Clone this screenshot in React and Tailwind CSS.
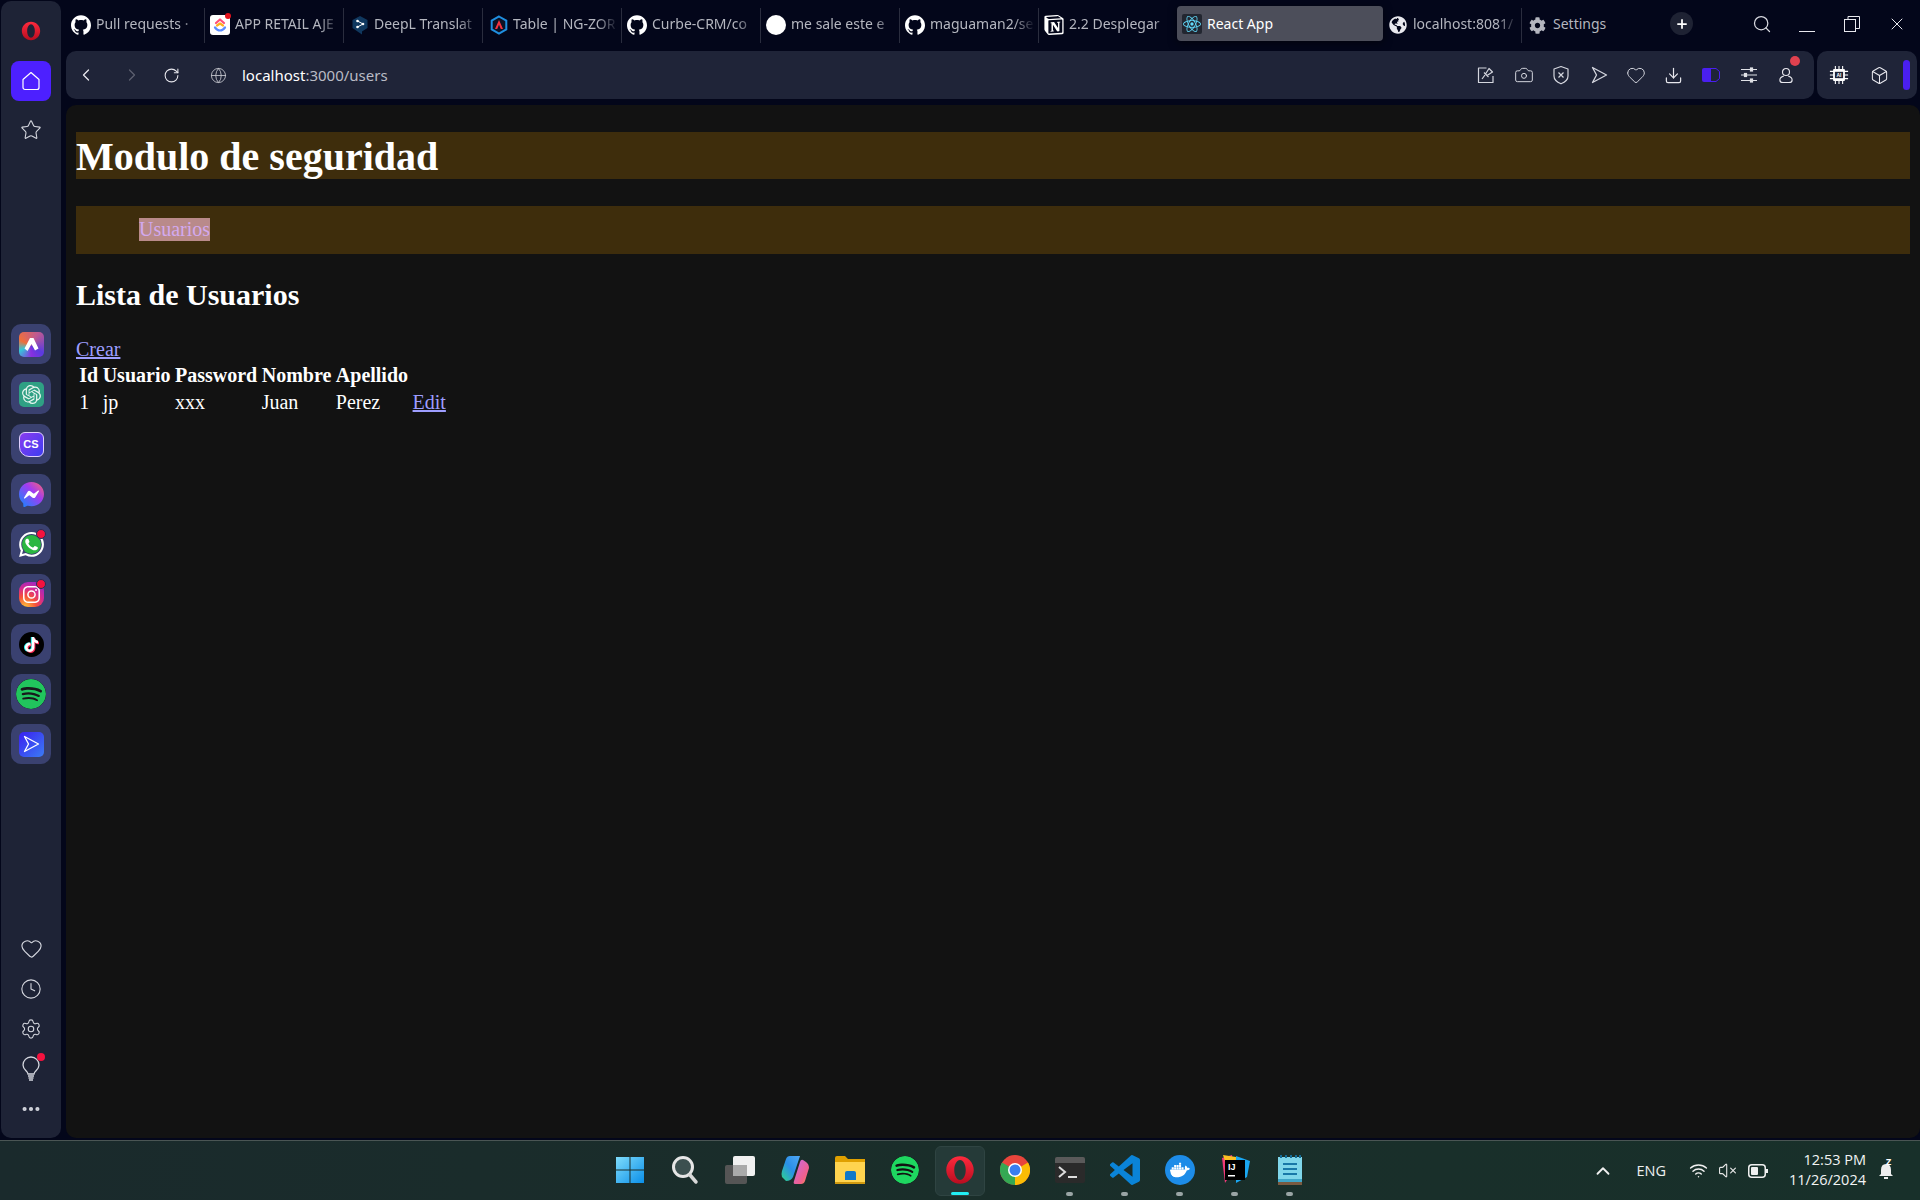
import React from "react";
import { Camera, Heart, Download, Box, ChevronLeft, ChevronRight, RotateCw, Globe, Clock, Settings, Star, Search, Plus, X, Wifi, VolumeX, ChevronUp, Ellipsis } from "lucide-react";
import { SiGithub, SiNotion, SiReact, SiWhatsapp, SiMessenger, SiOpenai, SiSpotify, SiTiktok, SiInstagram, SiDocker } from "react-icons/si";
import { FaGlobeAmericas, FaCog } from "react-icons/fa";

const Opera = ({ s = 20 }) => (
  <svg width={s} height={s} viewBox="0 0 24 24">
    <defs><linearGradient id="op" x1="0" y1="0" x2="0" y2="1"><stop offset="0" stopColor="#ff2a3d" /><stop offset="1" stopColor="#b80d20" /></linearGradient></defs>
    <path fillRule="evenodd" fill="url(#op)" d="M12 1C5.9 1 1 5.9 1 12s4.9 11 11 11 11-4.9 11-11S18.100 1 12 1zm0 3c2.600 0 4.600 3.600 4.600 8s-2 8-4.600 8-4.600-3.600-4.600-8 2-8 4.600-8z" />
  </svg>
);

const ClickUp = () => (
  <span className="relative w-[20px] h-[20px] rounded-[3px] bg-white flex items-center justify-center shrink-0">
    <svg width="16" height="16" viewBox="0 0 16 16" fill="none" strokeWidth="2.200" strokeLinecap="round" strokeLinejoin="round">
      <path d="M4 6 L8 2.500 L12 6" stroke="#ff4f7a" />
      <path d="M3 10.500 C6 14.500 10 14.500 13 10.500" stroke="#5b8cff" />
      <path d="M5 8.500 L8 6.500 L11 8.500" stroke="#ffb020" />
    </svg>
    <span className="absolute -top-[2px] -right-[1px] w-[6px] h-[6px] rounded-full bg-[#e3121d]" />
  </span>
);

const DeepL = () => (
  <svg width="18" height="20" viewBox="0 0 18 20" className="shrink-0 ml-[1px]">
    <path d="M9 1 L16.500 5 V13 L11 16.500 V19.500 L8 17.500 L1.500 13 V5 Z" fill="#10385f" />
    <circle cx="6.500" cy="6" r="1.300" fill="#fff" /><circle cx="6.500" cy="12" r="1.300" fill="#fff" /><circle cx="12" cy="9" r="1.300" fill="#fff" />
    <path d="M6.500 6 L12 9 L6.500 12" stroke="#fff" strokeWidth="1" fill="none" />
  </svg>
);

const Zorro = () => (
  <svg width="18" height="20" viewBox="0 0 18 20" className="shrink-0 ml-[1px]">
    <path d="M9 1.500 L16.300 5.700 V14.300 L9 18.500 L1.700 14.300 V5.700 Z" fill="#0d1224" stroke="#1f8fe0" strokeWidth="2" />
    <path d="M9 5 L13 14 H10.800 L9 9.800 L7.200 14 H5 Z" fill="#f5333f" />
  </svg>
);

const Tab = ({ icon, title, w = "w-[139px]", divider = true }) => (
  <div className={`${w} h-[35px] shrink-0 flex items-center pl-[5px] pr-[3px] gap-[5px] ${divider ? "border-r border-[#2a2d3e]" : ""}`}>
    <span className="w-[20px] h-[20px] flex items-center justify-center shrink-0">{icon}</span>
    <span className="flex-1 overflow-hidden whitespace-nowrap text-[14px] leading-[20px] -mt-[2px] text-[#b4b6bf] [mask-image:linear-gradient(to_right,black_80%,transparent)]">{title}</span>
  </div>
);

const Gh = () => <SiGithub size={20} color="#fff" />;

const TabBar = () => (
  <div className="h-[51px] flex pt-[6px] items-start">
    <div className="flex items-center h-[35px] pt-[1px] mt-[1px]">
      <Tab icon={<Gh />} title="Pull requests · " />
      <Tab icon={<ClickUp />} title="APP RETAIL AJE" />
      <Tab icon={<DeepL />} title="DeepL Translat" />
      <Tab icon={<Zorro />} title="Table | NG-ZOR" />
      <Tab icon={<Gh />} title="Curbe-CRM/co" />
      <Tab icon={<span className="w-[20px] h-[20px] rounded-full bg-white block" />} title="me sale este e" />
      <Tab icon={<Gh />} title="maguaman2/se" />
      <Tab icon={<SiNotion size={20} color="#fff" />} title="2.2 Desplegar" w="w-[138px]" divider={false} />
    </div>
    <div className="w-[206px] h-[35px] shrink-0 rounded-[4px] bg-[#4c4e5a] shadow-[0_2px_8px_rgba(0,0,0,0.5)] flex items-center pl-[5px] gap-[5px]">
      <span className="w-[20px] h-[20px] rounded-[2px] bg-[#222630] flex items-center justify-center"><SiReact size={18} color="#61dafb" /></span>
      <span className="text-[14px] leading-[20px] text-white">React App</span>
    </div>
    <div className="flex items-center h-[35px] pt-[1px] mt-[1px]">
      <Tab icon={<FaGlobeAmericas size={18} color="#e8e8ee" />} title="localhost:8081/" />
      <div className="flex items-center pl-[7px] gap-[7px]">
        <FaCog size={17} color="#b4b6bf" />
        <span className="text-[14px] leading-[20px] -mt-[2px] text-[#b4b6bf]">Settings</span>
      </div>
    </div>
    <div className="ml-[64px] mt-[6px] w-[23px] h-[23px] rounded-full bg-[#1e2233] flex items-center justify-center shrink-0">
      <Plus size={14} color="#fff" strokeWidth={3} />
    </div>
    <div className="ml-[59px] mt-[8px]"><Search size={20} color="#d8d9e0" strokeWidth={1.5} /></div>
    <div className="ml-[27px] mt-[25px] w-[16px] h-[1px] bg-[#e8e8ee]" />
    <svg width="16" height="16" viewBox="0 0 16 16" fill="none" stroke="#e8e8ee" className="ml-[29px] mt-[10px]"><rect x="0.500" y="3.500" width="11" height="12" /><path d="M4 3 V0.500 H15.500 V12.500 H12" /></svg>
    <X size={20} color="#e8e8ee" strokeWidth={1.2} className="ml-[27px] mt-[8px]" />
  </div>
);

const Send = ({ c = "#d4d6de" }) => (
  <svg width="18" height="18" viewBox="0 0 18 18" fill="none" stroke={c} strokeWidth="1.300" strokeLinejoin="round"><path d="M2.500 1.500 L16.500 9 L2.500 16.500 L6.500 9 Z" /></svg>
);

const NotePin = () => (
  <svg width="18" height="18" viewBox="0 0 18 18" fill="none" stroke="#d4d6de" strokeWidth="1.200" strokeLinejoin="round">
    <path d="M9.500 2 H1.500 V16.500 H16 V10" />
    <path d="M5 13 L8 9 M7 6.500 L11.500 11 M8.500 8 L12 2.500 L15.500 6 L10 9.500" />
  </svg>
);

const ShieldCross = () => (
  <svg width="18" height="20" viewBox="0 0 18 20" fill="none" stroke="#d4d6de" strokeWidth="1.200" strokeLinejoin="round">
    <path d="M9 1.500 L16 4 V11 Q16 16 9 18.800 Q2 16 2 11 V4 Z" /><path d="M6.500 7.500 L11.500 12.500 M11.500 7.500 L6.500 12.500" />
  </svg>
);

const Sliders = () => (
  <svg width="18" height="16" viewBox="0 0 18 16" fill="none" stroke="#e0e1e6" strokeWidth="1.200">
    <path d="M1 2.500 H17 M1 8 H17 M1 13.500 H17" /><rect x="10.500" y="1" width="2" height="3" fill="#e0e1e6" /><rect x="4.500" y="6.500" width="2" height="3" fill="#e0e1e6" /><rect x="10.500" y="12" width="2" height="3" fill="#e0e1e6" />
  </svg>
);

const UserIc = () => (
  <svg width="14" height="17" viewBox="0 0 16 18" fill="none" stroke="#e8e8ee" strokeWidth="1.300">
    <circle cx="8" cy="5" r="4" /><path d="M5.500 9.500 C2.500 10.500 1 12 1 14 C1 16 2.500 17 4.500 17 H11.500 C13.500 17 15 16 15 14 C15 12 13.500 10.500 10.500 9.500" />
  </svg>
);

const Chip = () => (
  <svg width="20" height="20" viewBox="0 0 22 22" fill="none">
    <path d="M7 1 V21 M11 1 V21 M15 1 V21 M1 7 H21 M1 11 H21 M1 15 H21" stroke="#fff" strokeWidth="1.200" />
    <rect x="4.500" y="4.500" width="13" height="13" rx="1" fill="#fff" />
    <rect x="6.500" y="7.500" width="9" height="7" fill="#1f2438" />
    <text x="11" y="13" textAnchor="middle" fontSize="5.500" fontWeight="700" fill="#fff" fontFamily="Liberation Sans, sans-serif">AI</text>
  </svg>
);

const TB = ({ children, w = "w-[37.500px]" }) => <span className={`${w} flex items-center justify-center shrink-0 relative`}>{children}</span>;

const Toolbar = () => (
  <div className="h-[48px] flex gap-[3px]">
    <div className="flex-1 rounded-[10px] bg-[#1f2438] flex items-center">
      <ChevronLeft size={20} color="#e8e8ee" strokeWidth={1.5} className="ml-[10px]" />
      <ChevronRight size={20} color="#5d6070" strokeWidth={1.5} className="ml-[26px]" />
      <RotateCw size={17} color="#e8e8ee" strokeWidth={1.5} className="ml-[21px]" />
      <Globe size={17} color="#c8c9d0" strokeWidth={1.2} className="ml-[30px]" />
      <span className="ml-[15px] mt-[1px] text-[15px] text-[#b9bbc5]"><span className="text-white">localhost</span>:3000/users</span>
      <div className="ml-auto mr-[9px] flex items-center">
        <TB><NotePin /></TB>
        <TB><Camera size={20} color="#d4d6de" strokeWidth={1.2} /></TB>
        <TB><ShieldCross /></TB>
        <TB><Send /></TB>
        <TB><Heart size={20} color="#d4d6de" strokeWidth={1.2} /></TB>
        <TB><Download size={19} color="#e8e8ee" strokeWidth={1.5} /></TB>
        <TB>
          <svg width="18" height="14" viewBox="0 0 18 14"><path d="M2 0 H9 V14 H2 A2 2 0 0 1 0 12 V2 A2 2 0 0 1 2 0Z" fill="#4a1ff0" /><path d="M9 .500 H14 L17.500 3.500 V10.500 L14 13.500 H9" fill="none" stroke="#4a1ff0" /></svg>
        </TB>
        <TB><Sliders /></TB>
        <TB>
          <UserIc />
          <span className="absolute -top-[11px] right-[5px] w-[10px] h-[10px] rounded-full bg-[#e0414f]" />
        </TB>
      </div>
    </div>
    <div className="w-[100px] rounded-[10px] bg-[#1f2438] flex items-center pl-[2px] mr-[3px]">
      <TB w="w-[40px]"><Chip /></TB>
      <TB w="w-[40px]"><Box size={19} color="#e8e8ee" strokeWidth={1.3} /></TB>
      <span className="w-[7px] h-[30px] ml-[4px] rounded-full bg-[#4a1ff0]" />
    </div>
  </div>
);

const Content = () => (
  <div className="mt-[6px] flex-1 rounded-[10px] bg-[#121212] px-[10px] text-white [font-family:'Liberation_Serif',serif] text-[20px] overflow-hidden">
    <h1 className="mt-[27px] h-[47px] leading-[47px] pt-px bg-[#3e2d0c] text-[40px] font-bold">Modulo de seguridad</h1>
    <nav className="mt-[27px] h-[48px] bg-[#3e2d0c] pl-[63px] flex items-center">
      <span className="bg-[#b98a8a] text-[#d3a9ef] leading-[23px] h-[23px] -mt-[1px]">Usuarios</span>
    </nav>
    <h2 className="mt-[24px] text-[30px] font-bold leading-[34px]">Lista de Usuarios</h2>
    <div className="mt-[26px] leading-[22px]"><a className="text-[#9e9eff] underline">Crear</a></div>
    <table className="border-separate border-spacing-[2.500px] mt-[1px] leading-[22px]">
      <thead>
        <tr>{["Id", "Usuario", "Password", "Nombre", "Apellido", ""].map((h, i) => <th key={i} className="p-[1.250px] font-bold">{h}</th>)}</tr>
      </thead>
      <tbody>
        <tr>
          {["1", "jp", "xxx", "Juan", "Perez"].map((c, i) => <td key={i} className="p-[1.250px] text-left">{c}</td>)}
          <td className="p-[1.250px] text-left"><a className="text-[#9e9eff] underline">Edit</a></td>
        </tr>
      </tbody>
    </table>
  </div>
);

const AppBox = ({ children, dot }) => (
  <div className="relative w-[40px] h-[40px] rounded-[10px] bg-[#3a4170] flex items-center justify-center">
    {children}
    {dot && <span className="absolute top-[5px] right-[5px] w-[10px] h-[10px] rounded-full bg-[#f5123f] border border-[#2a2f55]" />}
  </div>
);

const Arc = () => (
  <span className="w-[25px] h-[25px] rounded-[5px] bg-[conic-gradient(from_300deg_at_45%_55%,#f0703a,#c05a90_25%,#5a3be0_50%,#8a2fe0_65%,#35c8d8_85%,#f0703a)] flex items-center justify-center">
    <svg width="15" height="13" viewBox="0 0 15 13" fill="#fff"><path d="M6 0 L9.500 0 L14.500 10.500 L11 12.500 L7.500 6 L3.500 13 L0.500 10.500 Z" /></svg>
  </span>
);

const BulbIc = () => (
  <svg width="20" height="26" viewBox="0 0 20 26" fill="none" stroke="#d4d6de" strokeWidth="1.300">
    <path d="M7 18 C7 15 2 14 2 9 A8 8 0 0 1 18 9 C18 14 13 15 13 18 Z" /><path d="M7 20 H13 M7.500 22 H12.500 M8 24 H12" />
  </svg>
);

const SideI = ({ children }) => <div className="h-[40px] flex items-center justify-center">{children}</div>;

const Sidebar = () => (
  <div className="w-[60px] ml-px mt-px rounded-[10px] bg-[#1e2336] flex flex-col items-center pt-[20px] pb-[9px]">
    <Opera />
    <div className="mt-[20px] w-[40px] h-[40px] rounded-[8px] bg-[#4d20ff] flex items-center justify-center">
      <svg width="20" height="20" viewBox="0 0 20 20" fill="none" stroke="#fff" strokeWidth="1.200" strokeLinejoin="round"><path d="M10 1.500 L18 8.500 V16.500 A2 2 0 0 1 16 18.500 H4 A2 2 0 0 1 2 16.500 V8.500 Z" /></svg>
    </div>
    <Star size={22} color="#d4d6de" strokeWidth={1.2} className="mt-[18px]" />
    <div className="mt-[183px] flex flex-col gap-[10px]">
      <AppBox><Arc /></AppBox>
      <AppBox><span className="w-[25px] h-[25px] rounded-[5px] bg-[#2fa084] flex items-center justify-center"><SiOpenai size={19} color="#e8f5f0" /></span></AppBox>
      <AppBox><span className="w-[25px] h-[25px] rounded-[6px] rounded-bl-[10px] border border-[#e0d0ff] bg-[linear-gradient(135deg,#8a3cf0,#3d3df0)] text-white text-[11px] font-bold flex items-center justify-center [font-family:'Liberation_Sans',sans-serif]">CS</span></AppBox>
      <AppBox>
        <svg width="0" height="0" className="absolute"><defs><linearGradient id="ms" x1="0" y1="1" x2="1" y2="0"><stop offset="0" stopColor="#0a8cff" /><stop offset=".6" stopColor="#a33bf0" /><stop offset="1" stopColor="#ff6a6a" /></linearGradient></defs></svg>
        <span className="relative w-[25px] h-[25px] flex items-center justify-center">
          <span className="absolute left-[5px] top-[6px] w-[15px] h-[12px] bg-white" />
          <SiMessenger size={25} className="relative" style={{ fill: "url(#ms)" }} />
        </span>
      </AppBox>
      <AppBox dot>
        <span className="relative w-[25px] h-[25px] flex items-center justify-center">
          <span className="absolute left-[3px] top-[3px] w-[19px] h-[19px] rounded-full bg-[#2bb741]" />
          <SiWhatsapp size={25} color="#fff" className="relative" />
        </span>
      </AppBox>
      <AppBox dot><span className="w-[25px] h-[25px] rounded-[9px] bg-[radial-gradient(circle_at_25%_100%,#fdc13a,#f5503a_35%,#d62a90_60%,#7a2be2)] flex items-center justify-center"><SiInstagram size={17} color="#fff" /></span></AppBox>
      <AppBox>
        <span className="relative w-[25px] h-[25px] rounded-full bg-black flex items-center justify-center">
          <SiTiktok size={15} color="#25f4ee" className="absolute left-[4px] top-[5px]" />
          <SiTiktok size={15} color="#fe2c55" className="absolute left-[6px] top-[6px]" />
          <SiTiktok size={15} color="#fff" className="absolute left-[5px] top-[5.500px]" />
        </span>
      </AppBox>
      <AppBox><SiSpotify size={30} color="#21c55d" className="bg-[#18181c] rounded-full" /></AppBox>
      <AppBox><span className="w-[25px] h-[25px] rounded-[5px] bg-[linear-gradient(135deg,#3a1ff0,#3b7cf5)] flex items-center justify-center"><Send c="#fff" /></span></AppBox>
    </div>
    <div className="mt-auto flex flex-col items-center">
      <SideI><Heart size={23} color="#d4d6de" strokeWidth={1.2} className="-mt-[2px]" /></SideI>
      <SideI><Clock size={22} color="#d4d6de" strokeWidth={1.2} /></SideI>
      <SideI><Settings size={22} color="#d4d6de" strokeWidth={1.2} /></SideI>
      <SideI><span className="relative flex"><BulbIc /><span className="absolute -top-[3px] -right-[4px] w-[8px] h-[8px] rounded-full bg-[#f5123f]" /></span></SideI>
      <SideI><Ellipsis size={22} color="#d4d6de" strokeWidth={2.500} /></SideI>
    </div>
  </div>
);

const TI = ({ children, active, dot }) => (
  <div className={`relative w-[55px] h-[60px] flex items-center justify-center shrink-0`}>
    {active && <span className="absolute left-[2.500px] top-[5px] w-[50px] h-[50px] rounded-[6px] bg-[#253a38] border border-[#2f4442]" />}
    <span className="relative flex -mt-[1px]">{children}</span>
    {active && <span className="absolute left-[18.500px] top-[51px] w-[18px] h-[3px] rounded-full bg-[#22f0f5]" />}
    {dot && <span className="absolute left-[24px] top-[51px] w-[7px] h-[4px] rounded-full bg-[#9aa5a5]" />}
  </div>
);

const Taskbar = () => (
  <div className="h-[60px] border-t border-[#4a5554] bg-[linear-gradient(90deg,#1a2a2c,#1a2e2a_50%,#18302a)] flex items-center relative text-white [font-family:'Open_Sans',sans-serif]">
    <div className="flex pl-[602px] h-[59px] items-center">
      <TI>
        <svg width="28" height="28" viewBox="0 0 28 28"><defs><linearGradient id="win" x1="0" y1="0" x2="1" y2="1"><stop offset="0" stopColor="#7fdcfb" /><stop offset="1" stopColor="#0a8fe8" /></linearGradient></defs><path fill="url(#win)" d="M0 1 H13.500 V13.500 H0Z M14.500 1 H28 V13.500 H14.500Z M0 14.500 H13.500 V27 H0Z M14.500 14.500 H28 V27 H14.500Z" /></svg>
      </TI>
      <TI><svg width="28" height="30" viewBox="0 0 28 30" fill="none"><circle cx="12" cy="12" r="9.500" fill="#3c5050" stroke="#e6e6e6" strokeWidth="3" /><path d="M19 20 L25 27" stroke="#d8d8d8" strokeWidth="3.500" strokeLinecap="round" /></svg></TI>
      <TI><svg width="30" height="28" viewBox="0 0 30 28"><rect x="0" y="9" width="22" height="19" rx="2" fill="#555" /><rect x="8" y="0" width="22" height="20" rx="2" fill="#f1f1f1" /><rect x="8" y="9" width="14" height="11" fill="#aaa" /></svg></TI>
      <TI><svg width="28" height="30" viewBox="0 0 28 30"><defs><linearGradient id="co1" x1="0" y1="1" x2="1" y2="0"><stop offset="0" stopColor="#2fd58a" /><stop offset=".5" stopColor="#2a8fe8" /><stop offset="1" stopColor="#4fa8f5" /></linearGradient><linearGradient id="co2" x1="0" y1="0" x2="1" y2="1"><stop offset="0" stopColor="#c86be8" /><stop offset=".7" stopColor="#f05f8a" /><stop offset="1" stopColor="#f8a13a" /></linearGradient></defs><path fill="url(#co1)" d="M9 1 H19 L12 22 Q10 26 5 26 L1 22 Q0 19 1 16 L5 4 Q6 1 9 1Z" /><path fill="url(#co2)" d="M14 29 H20 Q23 29 24 26 L28 13 Q28 9 25 7 L22 5 Q20 4 19 7 L13 26 Q12 29 14 29Z" /></svg></TI>
      <TI><svg width="30" height="28" viewBox="0 0 30 28"><path fill="#e0a000" d="M0 2 Q0 0 2 0 H10 L13 3 H30 V10 H0Z" /><path fill="#ffd44f" d="M0 6 H30 V28 H0Z" /><path fill="#0f78c8" d="M10 17 Q10 15 12 15 H19 Q21 15 21 17 V24 H10Z" /><rect x="0" y="26" width="30" height="2" fill="#d19a10" /></svg></TI>
      <TI><SiSpotify size={28} color="#1ed760" className="bg-[#121212] rounded-full" /></TI>
      <TI active><Opera s={30} /></TI>
      <TI><svg width="30" height="30" viewBox="0 0 30 30"><circle cx="15" cy="15" r="15" fill="#e8453c" /><path d="M15 15 L2 22.500 A15 15 0 0 1 2 7.500Z M15 15 L2 22.500 A15 15 0 0 0 15 30 Z" fill="#34a853" /><path d="M15 15 L28 7.500 A15 15 0 0 1 15 30Z" fill="#fbbc05" /><circle cx="15" cy="15" r="7" fill="#fff" /><circle cx="15" cy="15" r="5.500" fill="#3a7ef0" /></svg></TI>
      <TI dot><svg width="30" height="26" viewBox="0 0 30 26"><rect width="30" height="26" rx="2" fill="#2a2a2a" /><path d="M0 2 Q0 0 2 0 H28 Q30 0 30 2 V6 H0Z" fill="#5a5a5a" /><path d="M4 10 L10 15 L4 20" stroke="#ddd" strokeWidth="2" fill="none" /><path d="M13 20 H22" stroke="#ddd" strokeWidth="2" /></svg></TI>
      <TI dot><svg width="30" height="30" viewBox="0 0 24 24"><path fill="#0a84d8" d="M23.150 2.587L18.210.21a1.494 1.494 0 0 0-1.705.29l-9.460 8.630-4.120-3.128a.999.999 0 0 0-1.276.057L.327 7.261A1 1 0 0 0 .326 8.740L3.899 12 .326 15.260a1 1 0 0 0 .001 1.479L1.650 17.940a.999.999 0 0 0 1.276.057l4.120-3.128 9.460 8.630a1.492 1.492 0 0 0 1.704.29l4.942-2.377A1.500 1.500 0 0 0 24 20.060V3.939a1.500 1.500 0 0 0-.850-1.352zm-5.146 14.861L10.826 12l7.178-5.448v10.896z" /></svg></TI>
      <TI dot><SiDocker size={19} color="#fff" className="w-[30px] h-[30px] p-[5px] rounded-full bg-[#1d8ce8]" /></TI>
      <TI dot><svg width="30" height="30" viewBox="0 0 30 30"><path d="M2 3 L12 0 L14 14 L5 28Z" fill="#f03a7a" /><path d="M3 0 L16 2 L20 12 L8 16Z" fill="#fbbf24" /><path d="M16 1 L30 6 L27 22 L16 28Z" fill="#1aa6f0" /><rect x="5" y="5" width="20" height="20" fill="#000" /><text x="8" y="15" fontSize="9" fontWeight="700" fill="#fff" fontFamily="Liberation Sans, sans-serif">IJ</text><rect x="8" y="20" width="7" height="1.500" fill="#fff" /></svg></TI>
      <TI dot><svg width="24" height="30" viewBox="0 0 24 30"><rect y="2" width="24" height="27" fill="#7fd6ea" /><rect y="26" width="24" height="4" fill="#7a5a40" /><rect y="24" width="24" height="3" fill="#3fa6c8" /><path d="M3 3 V0 M8 3 V0 M13 3 V0 M18 3 V0 M22 3 V0" stroke="#146c96" strokeWidth="2" /><path d="M5 9 H19 M5 14 H19 M5 19 H19" stroke="#1878a8" strokeWidth="2" /></svg></TI>
    </div>
    <div className="ml-auto flex items-center pr-[25px] h-[59px]">
      <ChevronUp size={22} color="#f0f0f0" strokeWidth={2} />
      <span className="ml-[22px] text-[14.500px] text-[#eef0f0]">ENG</span>
      <Wifi size={19} color="#f0f0f0" strokeWidth={1.8} className="ml-[23px]" />
      <VolumeX size={19} color="#e8e8e8" strokeWidth={1.4} className="ml-[10px]" />
      <svg width="20" height="14" viewBox="0 0 20 14" fill="none" className="ml-[11px]"><rect x=".750" y=".750" width="16.500" height="12.500" rx="3" stroke="#f0f0f0" strokeWidth="1.500" /><rect x="3" y="3" width="7" height="8" rx="1" fill="#f0f0f0" /><rect x="18" y="5" width="2" height="4" fill="#f0f0f0" /></svg>
      <div className="ml-[18px] w-[80px] flex flex-col items-end text-[14.500px] leading-[20px] text-[#f2f4f4] -mt-[1px]">
        <span>12:53 PM</span>
        <span>11/26/2024</span>
      </div>
      <span className="ml-[11px] relative w-[18px] h-[18px]">
        <svg width="18" height="18" viewBox="0 0 18 18" fill="#eee"><path d="M9 2 Q14 2 14 8 V12 L16 14 H2 L4 12 V8 Q4 2 9 2Z" /><rect x="7" y="15" width="4" height="2" /></svg>
        <span className="absolute -top-[5px] left-[9px] text-[9px] font-bold leading-none text-white">Z</span>
      </span>
    </div>
  </div>
);

export default function App() {
  return (
    <div className="w-[1920px] h-[1200px] flex flex-col bg-[#03061a] overflow-hidden [font-family:'Noto_Sans',sans-serif]">
      <div className="h-[1140px] flex pb-[2px]">
        <Sidebar />
        <div className="flex-1 min-w-0 pl-[5px] flex flex-col">
          <TabBar />
          <Toolbar />
          <Content />
        </div>
      </div>
      <Taskbar />
    </div>
  );
}
